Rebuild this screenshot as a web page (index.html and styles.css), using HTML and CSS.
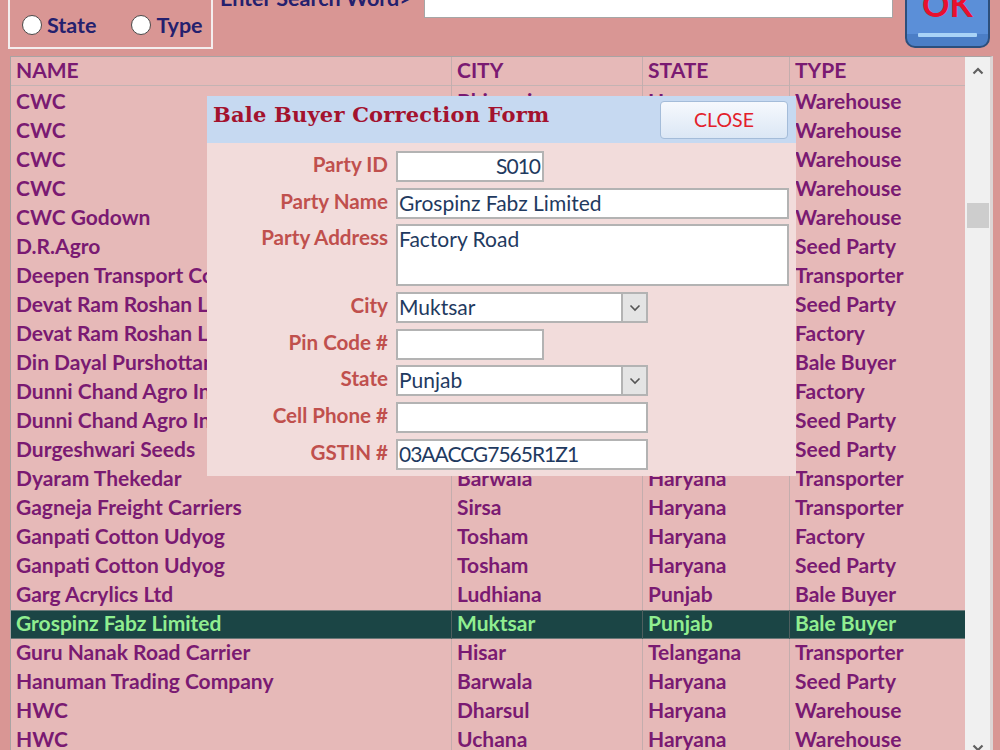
FILE: index.html
```html
<!DOCTYPE html>
<html>
<head>
<meta charset="utf-8">
<title>Party List</title>
<link rel="stylesheet" href="styles.css">
</head>
<body>
<div class="top">
  <div class="optgroup">
    <div class="opt"><span class="radio"></span>State</div>
    <div class="opt"><span class="radio"></span>Type</div>
  </div>
  <div class="search-label">Enter Search Word&gt;</div>
  <div class="search-box"></div>
  <div class="ok-btn"><span class="ok-text">OK</span></div>
</div>

<div class="grid">
  <div class="table">
    <div class="row head">
      <div class="cell">NAME</div><div class="cell">CITY</div><div class="cell">STATE</div><div class="cell">TYPE</div>
    </div>
    <div class="row"><div class="cell">CWC</div><div class="cell">Bhiwani</div><div class="cell">Haryana</div><div class="cell">Warehouse</div></div>
    <div class="row"><div class="cell">CWC</div><div class="cell">Sirsa</div><div class="cell">Haryana</div><div class="cell">Warehouse</div></div>
    <div class="row"><div class="cell">CWC</div><div class="cell">Hisar</div><div class="cell">Haryana</div><div class="cell">Warehouse</div></div>
    <div class="row"><div class="cell">CWC</div><div class="cell">Tohana</div><div class="cell">Haryana</div><div class="cell">Warehouse</div></div>
    <div class="row"><div class="cell">CWC Godown</div><div class="cell">Fatehabad</div><div class="cell">Haryana</div><div class="cell">Warehouse</div></div>
    <div class="row"><div class="cell">D.R.Agro</div><div class="cell">Adampur</div><div class="cell">Haryana</div><div class="cell">Seed Party</div></div>
    <div class="row"><div class="cell">Deepen Transport Company</div><div class="cell">Sirsa</div><div class="cell">Haryana</div><div class="cell">Transporter</div></div>
    <div class="row"><div class="cell">Devat Ram Roshan Lal</div><div class="cell">Adampur</div><div class="cell">Haryana</div><div class="cell">Seed Party</div></div>
    <div class="row"><div class="cell">Devat Ram Roshan Lal</div><div class="cell">Adampur</div><div class="cell">Haryana</div><div class="cell">Factory</div></div>
    <div class="row"><div class="cell">Din Dayal Purshottam Dass</div><div class="cell">Abohar</div><div class="cell">Punjab</div><div class="cell">Bale Buyer</div></div>
    <div class="row"><div class="cell">Dunni Chand Agro Industries</div><div class="cell">Uklana</div><div class="cell">Haryana</div><div class="cell">Factory</div></div>
    <div class="row"><div class="cell">Dunni Chand Agro Industries</div><div class="cell">Uklana</div><div class="cell">Haryana</div><div class="cell">Seed Party</div></div>
    <div class="row"><div class="cell">Durgeshwari Seeds</div><div class="cell">Hisar</div><div class="cell">Haryana</div><div class="cell">Seed Party</div></div>
    <div class="row"><div class="cell">Dyaram Thekedar</div><div class="cell">Barwala</div><div class="cell">Haryana</div><div class="cell">Transporter</div></div>
    <div class="row"><div class="cell">Gagneja Freight Carriers</div><div class="cell">Sirsa</div><div class="cell">Haryana</div><div class="cell">Transporter</div></div>
    <div class="row"><div class="cell">Ganpati Cotton Udyog</div><div class="cell">Tosham</div><div class="cell">Haryana</div><div class="cell">Factory</div></div>
    <div class="row"><div class="cell">Ganpati Cotton Udyog</div><div class="cell">Tosham</div><div class="cell">Haryana</div><div class="cell">Seed Party</div></div>
    <div class="row"><div class="cell">Garg Acrylics Ltd</div><div class="cell">Ludhiana</div><div class="cell">Punjab</div><div class="cell">Bale Buyer</div></div>
    <div class="row selected"><div class="cell">Grospinz Fabz Limited</div><div class="cell">Muktsar</div><div class="cell">Punjab</div><div class="cell">Bale Buyer</div></div>
    <div class="row"><div class="cell">Guru Nanak Road Carrier</div><div class="cell">Hisar</div><div class="cell">Telangana</div><div class="cell">Transporter</div></div>
    <div class="row"><div class="cell">Hanuman Trading Company</div><div class="cell">Barwala</div><div class="cell">Haryana</div><div class="cell">Seed Party</div></div>
    <div class="row"><div class="cell">HWC</div><div class="cell">Dharsul</div><div class="cell">Haryana</div><div class="cell">Warehouse</div></div>
    <div class="row"><div class="cell">HWC</div><div class="cell">Uchana</div><div class="cell">Haryana</div><div class="cell">Warehouse</div></div>
  </div>
  <div class="scrollbar">
    <div class="sb-btn">
      <svg width="12" height="8" viewBox="0 0 12 8"><polyline points="1.5,6.5 6,2 10.5,6.5" fill="none" stroke="#606060" stroke-width="2.2"/></svg>
    </div>
    <div class="sb-track"><div class="sb-thumb"></div></div>
    <div class="sb-btn">
      <svg width="12" height="8" viewBox="0 0 12 8"><polyline points="1.5,1.5 6,6 10.5,1.5" fill="none" stroke="#606060" stroke-width="2.2"/></svg>
    </div>
  </div>
</div>

<div class="dialog">
  <div class="dlg-head">
    <div class="dlg-title">Bale Buyer Correction Form</div>
    <div class="close-btn">CLOSE</div>
  </div>
  <div class="dlg-body">
    <div class="frow"><div class="flabel">Party ID</div><div class="field w-s right code">S010</div></div>
    <div class="frow"><div class="flabel">Party Name</div><div class="field w-l">Grospinz Fabz Limited</div></div>
    <div class="frow"><div class="flabel">Party Address</div><div class="field w-l tall">Factory Road</div></div>
    <div class="frow"><div class="flabel">City</div>
      <div class="field w-m combo"><span class="ctext">Muktsar</span>
        <span class="dd"><svg width="12" height="8" viewBox="0 0 12 8"><polyline points="1.5,1.5 6,6 10.5,1.5" fill="none" stroke="#555" stroke-width="1.6"/></svg></span>
      </div>
    </div>
    <div class="frow"><div class="flabel">Pin Code #</div><div class="field w-s"></div></div>
    <div class="frow"><div class="flabel">State</div>
      <div class="field w-m combo"><span class="ctext">Punjab</span>
        <span class="dd"><svg width="12" height="8" viewBox="0 0 12 8"><polyline points="1.5,1.5 6,6 10.5,1.5" fill="none" stroke="#555" stroke-width="1.6"/></svg></span>
      </div>
    </div>
    <div class="frow"><div class="flabel">Cell Phone #</div><div class="field w-m"></div></div>
    <div class="frow"><div class="flabel">GSTIN #</div><div class="field w-m code">03AACCG7565R1Z1</div></div>
  </div>
</div>
</body>
</html>
```

FILE: styles.css
```css
* { box-sizing: border-box; }
html, body { margin: 0; padding: 0; }
body {
  width: 1000px;
  height: 750px;
  overflow: hidden;
  position: relative;
  background: #d99694;
  font-family: Lato, "Open Sans", sans-serif;
}

/* ---------- top bar ---------- */
.top {
  display: flex;
  align-items: flex-start;
  height: 56px;
}
.optgroup {
  margin-left: 8px;
  margin-top: -12px;
  width: 205px;
  height: 61px;
  border: 2px solid #f4eeee;
  display: flex;
  align-items: flex-end;
  gap: 35px;
  padding: 0 0 12px 12px;
}
.opt {
  display: flex;
  align-items: center;
  gap: 5px;
  height: 20px;
  line-height: 20px;
  font-weight: 700;
  font-size: 21.5px;
  color: #24206e;
}
.radio {
  width: 20px;
  height: 20px;
  border-radius: 50%;
  background: #fff;
  border: 1.5px solid #4a4a4a;
}
.search-label {
  margin-left: 7px;
  width: 204px;
  margin-top: -14px;
  font-weight: 700;
  font-size: 21.5px;
  line-height: 24px;
  color: #24206e;
  white-space: nowrap;
}
.search-box {
  width: 469px;
  height: 31px;
  margin-top: -13px;
  background: #fff;
  border: 1px solid #a6a6a6;
}
.ok-btn {
  position: relative;
  margin-left: 12px;
  width: 85px;
  height: 62px;
  margin-top: -14px;
  background: linear-gradient(to bottom, #5b8fd8 0, #5b8fd8 46px, #4b7ec6 46px);
  border: 2px solid #2c4f7c;
  border-radius: 0 0 10px 10px;
}
.ok-btn::after {
  content: "";
  position: absolute;
  left: 11px;
  right: 11px;
  bottom: 9px;
  height: 4px;
  background: #a9d3f7;
  border-radius: 1px;
}
.ok-text {
  display: block;
  margin-top: -1px;
  text-align: center;
  font-weight: 700;
  font-size: 34px;
  line-height: 34px;
  color: #e8102e;
}

/* ---------- grid ---------- */
.grid {
  display: flex;
  margin-left: 10px;
  width: 983px;
  height: 706px;
  border-top: 1px solid #a9a3a3;
  border-left: 1px solid #a9a3a3;
  border-right: 3px solid #ddd5d5;
}
.table {
  width: 954px;
  background: #e6b9b8;
}
.row {
  display: grid;
  grid-template-columns: 441px 191px 147px 175px;
  height: 29px;
}
.cell {
  padding-left: 5px;
  line-height: 26px;
  font-weight: 700;
  font-size: 21px;
  color: #7a1a72;
  white-space: nowrap;
  overflow: hidden;
  border-right: 1px solid #c4adad;
}
.cell:last-child { border-right: none; }
.head { height: 31px; }
.head .cell {
  background: linear-gradient(to bottom, #e6b9b8 0, #e6b9b8 28px, #c4b3b3 28px, #c4b3b3 29px, #e6b9b8 29px);
}
.selected {
  background: #1b4545;
  box-shadow: inset 0 1px 0 #6a7878, inset 0 -1px 0 #6a7878;
}
.selected .cell {
  color: #90ee90;
  border-right-color: #4f5f5f;
}

.scrollbar {
  width: 25px;
  background: #f0f0f0;
  display: flex;
  flex-direction: column;
}
.sb-btn {
  height: 28px;
  display: flex;
  align-items: center;
  justify-content: center;
}
.sb-track { flex: 1; }
.sb-thumb {
  margin: 118px 1px 0 2px;
  height: 25px;
  background: #cdcdcd;
}

/* ---------- dialog ---------- */
.dialog {
  position: absolute;
  left: 207px;
  top: 96px;
  width: 589px;
  height: 380px;
  background: #f2dcdb;
}
.dlg-head {
  height: 47px;
  background: #c6d9f1;
  display: flex;
  align-items: flex-start;
  justify-content: space-between;
  padding: 0 8px 0 6px;
}
.dlg-title {
  margin-top: 7px;
  font-family: "DejaVu Serif", "Liberation Serif", serif;
  font-weight: 700;
  font-size: 21px;
  line-height: 24px;
  letter-spacing: 0.2px;
  color: #a3122e;
  white-space: nowrap;
}
.close-btn {
  margin-top: 5px;
  width: 128px;
  height: 38px;
  border: 1px solid #a4bcd9;
  border-radius: 4px;
  background: linear-gradient(to bottom, #f6f9fd, #dbe7f5);
  text-align: center;
  font-size: 19.5px;
  line-height: 36px;
  color: #e3202a;
}
.dlg-body {
  display: flex;
  flex-direction: column;
  gap: 5.7px;
  padding: 8px 7px 0 0;
}
.frow {
  display: grid;
  grid-template-columns: 181px auto;
  column-gap: 8px;
  align-items: start;
}
.flabel {
  text-align: right;
  font-weight: 700;
  font-size: 20.6px;
  line-height: 27px;
  color: #c0504d;
  white-space: nowrap;
}
.field {
  height: 31px;
  border: 2px solid #b3b3b3;
  background: #fff;
  padding-left: 1px;
  font-size: 21px;
  line-height: 25px;
  color: #1f3a60;
  white-space: nowrap;
  overflow: hidden;
}
.code { letter-spacing: -1px; }
.w-s { width: 148px; }
.w-m { width: 252px; }
.w-l { width: 393px; }
.tall { height: 62px; }
.right { text-align: right; padding-right: 2px; }
.combo {
  display: flex;
  padding-left: 0;
}
.ctext { flex: 1; padding-left: 1px; }
.dd {
  width: 25px;
  background: #e4e4e4;
  border-left: 2px solid #b3b3b3;
  display: flex;
  align-items: center;
  justify-content: center;
}
```
